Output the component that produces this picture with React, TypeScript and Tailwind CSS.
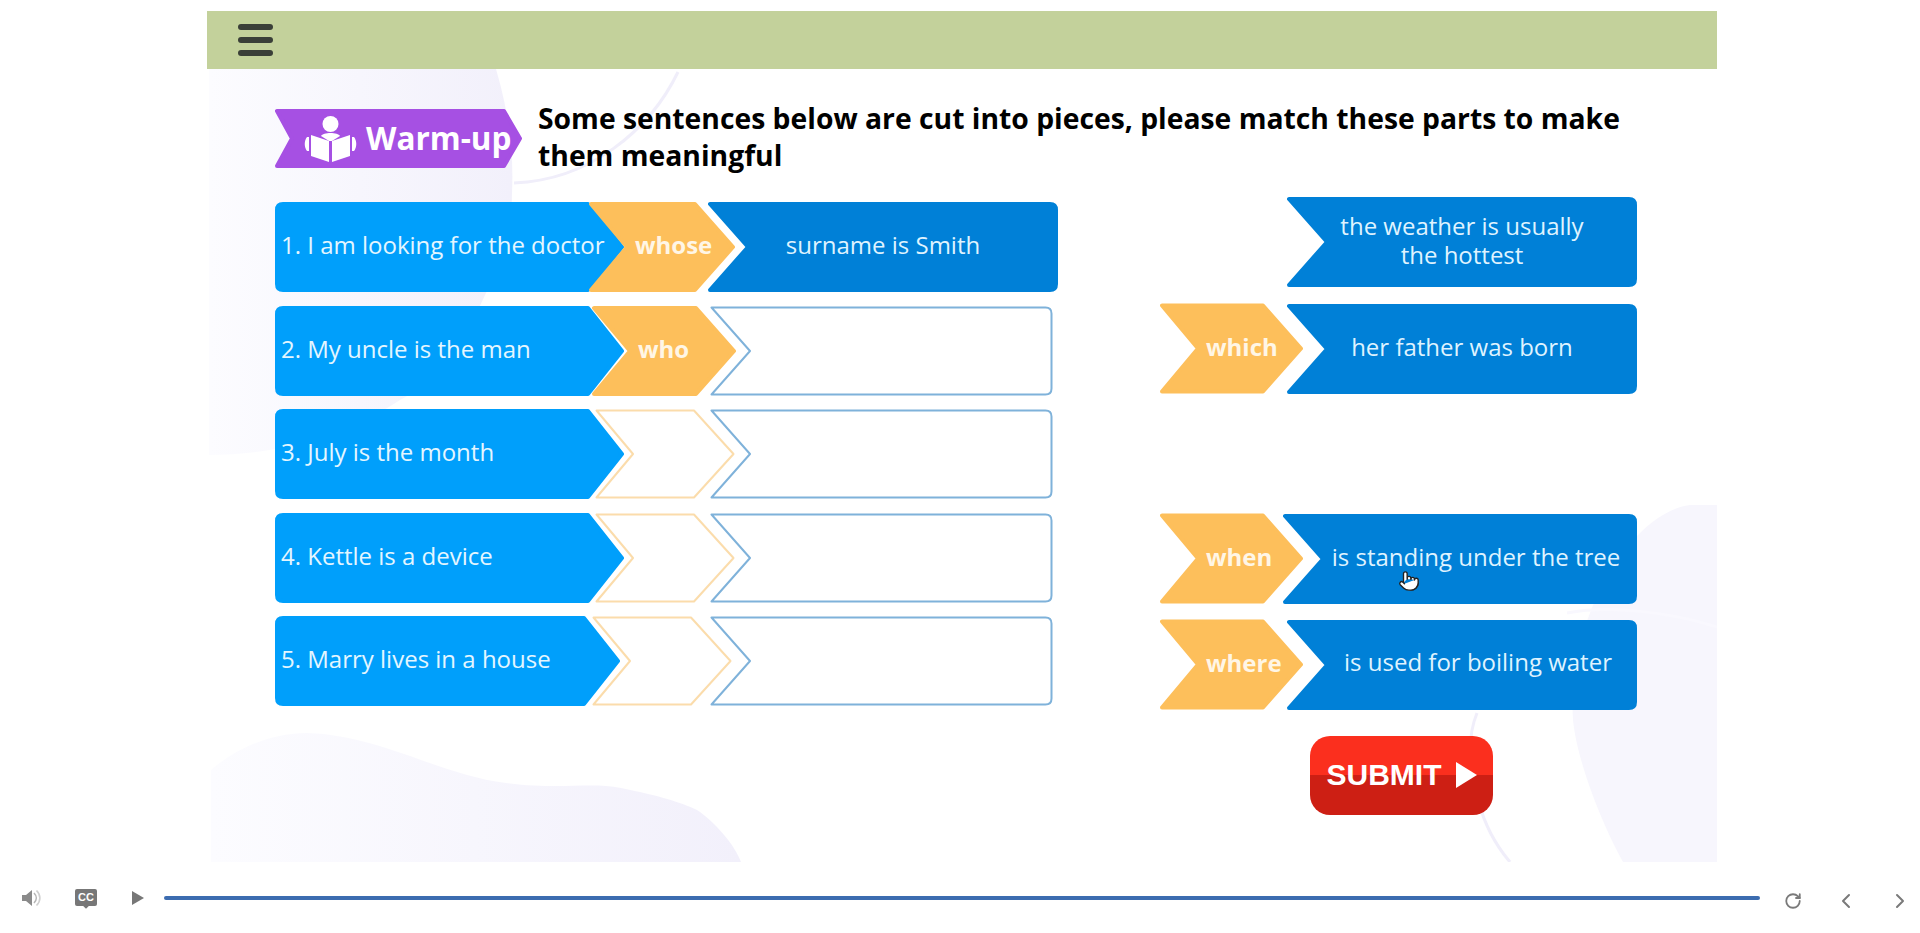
import type { ReactNode } from 'react';
import { ChevronLeft, ChevronRight, Pointer, RotateCw } from 'lucide-react';

const BLUE = '#009ffb';
const DARK = '#0080d7';
const ORANGE = '#fdbf5b';

// builds the outline for a ribbon: optional notch on the left, optional point on the right
function ribbon(w: number, h: number, notch: number, point: number, i: number) {
  const r = 6;
  const left = notch > 0
    ? `M${i} ${i}`
    : `M${i + r} ${i}`;
  const right = point > 0
    ? `H${w - point} L${w - i} ${h / 2} L${w - point} ${h - i}`
    : `H${w - i - r} Q${w - i} ${i} ${w - i} ${i + r} V${h - i - r} Q${w - i} ${h - i} ${w - i - r} ${h - i}`;
  const back = notch > 0
    ? `H${i} L${notch} ${h / 2} Z`
    : `H${i + r} Q${i} ${h - i} ${i} ${h - i - r} V${i + r} Q${i} ${i} ${i + r} ${i} Z`;
  return `${left} ${right} ${back}`;
}

type TagProps = {
  w: number;
  h: number;
  notch?: number;
  point?: number;
  fill?: string;
  stroke?: string;
  className: string;
  children?: ReactNode;
};

function Tag({ w, h, notch = 0, point = 0, fill, stroke, className, children }: TagProps) {
  return (
    <div className={`relative flex shrink-0 items-center ${className}`}>
      <svg className="absolute inset-0 h-full w-full" viewBox={`0 0 ${w} ${h}`} fill="none">
        <path
          d={ribbon(w, h, notch, point, fill ? 2 : 1.5)}
          fill={fill ?? '#ffffff'}
          stroke={fill ?? stroke}
          strokeWidth={fill ? 4 : 2}
          strokeLinejoin="round"
        />
      </svg>
      {children}
    </div>
  );
}

function Sentence({ text, w = 349, shoulder = 36 }: { text: string; w?: number; shoulder?: number }) {
  return (
    <Tag
      w={w}
      h={90}
      point={shoulder}
      fill={BLUE}
      className={w === 345 ? 'h-[90px] w-[345px]' : 'h-[90px] w-[349px]'}
    >
      <span className="relative whitespace-nowrap pb-[4px] pl-[6px] text-[24px] text-[#e4f6ff]">{text}</span>
    </Tag>
  );
}

function Word({ text, w = 143, className }: { text: string; w?: number; className: string }) {
  return (
    <Tag w={w} h={90} notch={38} point={40} fill={ORANGE} className={className}>
      <span className="relative pb-[4px] pl-[46px] text-[24px] font-bold text-[#fff6e6]">{text}</span>
    </Tag>
  );
}

function Answer({ children, className }: { children: ReactNode; className: string }) {
  return (
    <Tag w={350} h={90} notch={40} fill={DARK} className={`h-[90px] w-[350px] justify-center ${className}`}>
      <span className="relative pb-[5px] text-center text-[24px] leading-[29px] text-[#dff3ff]">{children}</span>
    </Tag>
  );
}

function EmptyWord({ className }: { className: string }) {
  return <Tag w={140} h={90} notch={38} point={41} stroke="#fbdcab" className={`h-[90px] w-[140px] ${className}`} />;
}

function EmptyAnswer({ className }: { className: string }) {
  return <Tag w={343} h={90} notch={40} stroke="#7fb2da" className={`h-[90px] w-[343px] ${className}`} />;
}

function Decor() {
  return (
    <svg className="absolute inset-0 h-full w-full" viewBox="207 69 1510 793" fill="none">
      <defs>
        <linearGradient id="lav" x1="0" x2="1" y1="0" y2="0">
          <stop offset="0" stopColor="#fcfcff" />
          <stop offset="1" stopColor="#f2f0fb" />
        </linearGradient>
      </defs>
      <path
        d="M209 69 H496 C508 110 514 150 512 193 C512 240 500 270 486 293 C460 350 430 385 400 400 C340 440 270 455 209 455 Z"
        fill="url(#lav)"
      />
      <path d="M678 72 C650 130 590 180 514 183" stroke="#f0eefa" strokeWidth="3" />
      <path
        d="M211 770 C240 745 275 733 307 733 C380 735 440 775 506 783 C560 790 590 782 621 788 C660 796 680 802 697 810 C715 822 735 845 741 862 H211 Z"
        fill="url(#lav)"
      />
      <path
        d="M1717 505 H1690 C1650 510 1610 560 1590 613 C1575 650 1571 690 1573 720 C1577 760 1600 820 1623 862 H1717 Z"
        fill="#f7f6fd"
      />
      <path d="M1477 713 C1468 735 1468 765 1478 800 C1486 830 1498 848 1510 862" stroke="#f0eefa" strokeWidth="3" />
      <path d="M1567 613 C1610 605 1670 612 1717 627" stroke="#f9f8fe" strokeWidth="3" />
    </svg>
  );
}

function ReaderIcon() {
  return (
    <svg width="53" height="48" viewBox="0 0 53 48" fill="#ffffff" className="shrink-0">
      <circle cx="26.5" cy="9" r="8" />
      <path d="M17 21 C19 17 34 17 36 21 L28 26 L25 26 Z" />
      <path d="M7 20 L25 26 V47 L7 41 Z" />
      <path d="M46 20 L28 26 V47 L46 41 Z" />
      <path d="M3 22 C0 26 0 32 3 36 H5 V22 Z" />
      <path d="M50 22 C53 26 53 32 50 36 H48 V22 Z" />
    </svg>
  );
}

export default function App() {
  return (
    <div className="relative flex h-[933px] flex-col overflow-hidden bg-white font-['Open_Sans',sans-serif]">
      <div className="ml-[207px] mt-[11px] w-[1510px]">
        <div className="flex h-[58px] items-center bg-[#c3d19b] pl-[31px]">
          <div className="flex w-[35px] flex-col gap-[7px]">
            <div className="h-[6px] rounded-full bg-[#3a3f38]" />
            <div className="h-[6px] rounded-full bg-[#3a3f38]" />
            <div className="h-[6px] rounded-full bg-[#3a3f38]" />
          </div>
        </div>

        <div className="relative h-[793px] pl-[68px] pt-[40px]">
          <Decor />

          <div className="relative flex items-start">
            <Tag w={247} h={59} notch={17} point={18} fill="#a650e3" className="h-[59px] w-[247px] pl-[29px]">
              <div className="relative flex items-center gap-[9px]">
                <ReaderIcon />
                <span className="whitespace-nowrap pb-[2px] text-[31.5px] font-bold leading-none text-white">Warm-up</span>
              </div>
            </Tag>
            <h1 className="-mt-[9px] ml-[16px] w-[1110px] text-[28.3px] font-bold leading-[37px] text-black">
              Some sentences below are cut into pieces, please match these parts to make them meaningful
            </h1>
          </div>

          <div className="relative mt-[23px] flex items-start">
            <div className="flex w-[786px] flex-col gap-[13.5px] pt-[5px]">
              <div className="flex">
                <Sentence text="1. I am looking for the doctor" />
                <Word text="whose" w={146} className="-ml-[35px] h-[90px] w-[146px]" />
                <Answer className="-ml-[27px]">surname is Smith</Answer>
              </div>
              <div className="flex">
                <Sentence text="2. My uncle is the man" />
                <Word text="who" w={144} className="-ml-[32px] h-[90px] w-[144px]" />
                <EmptyAnswer className="-ml-[26px]" />
              </div>
              <div className="flex">
                <Sentence text="3. July is the month" />
                <EmptyWord className="-ml-[29px]" />
                <EmptyAnswer className="-ml-[25px]" />
              </div>
              <div className="flex">
                <Sentence text="4. Kettle is a device" />
                <EmptyWord className="-ml-[29px]" />
                <EmptyAnswer className="-ml-[25px]" />
              </div>
              <div className="flex">
                <Sentence text="5. Marry lives in a house" w={345} />
                <EmptyWord className="-ml-[28px]" />
                <EmptyAnswer className="-ml-[22px]" />
              </div>
            </div>

            <div className="ml-[99px] flex flex-col">
              <Answer className="ml-[127px]">
                the weather is usually
                <br />
                the hottest
              </Answer>

              <div className="mt-[15px] flex items-center">
                <Word text="which" className="h-[93px] w-[143px]" />
                <Answer className="-ml-[16px]">her father was born</Answer>
              </div>

              <div className="relative mt-[117px] flex items-center">
                <Word text="when" className="h-[93px] w-[143px]" />
                <Tag w={354} h={90} notch={40} fill={DARK} className="-ml-[20px] h-[90px] w-[354px] justify-center pl-[32px]">
                  <span className="relative whitespace-nowrap pb-[4px] text-[24px] text-[#dff3ff]">is standing under the tree</span>
                </Tag>
                <Pointer size={22} fill="#ffffff" strokeWidth={1.5} className="absolute left-[238px] top-[58px] text-[#222222]" />
              </div>

              <div className="mt-[13px] flex items-center">
                <Word text="where" className="h-[93px] w-[143px]" />
                <Tag w={350} h={90} notch={40} fill={DARK} className="-ml-[16px] h-[90px] w-[350px] justify-center pl-[32px]">
                  <span className="relative whitespace-nowrap pb-[5px] text-[24px] text-[#dff3ff]">is used for boiling water</span>
                </Tag>
              </div>

              <button className="ml-[150px] mt-[25px] flex h-[79px] w-[183px] items-center justify-center gap-[14px] rounded-[20px] bg-[linear-gradient(#fb2f1e_50%,#cd1f14_50%)] pb-[2px] font-['Liberation_Sans',sans-serif] text-[30px] font-bold text-white">
                SUBMIT
                <span className="h-0 w-0 border-y-[13px] border-l-[21px] border-y-transparent border-l-white" />
              </button>
            </div>
          </div>
        </div>
      </div>

      <div className="flex h-[71px] items-center text-[#7a7a7a]">
        <svg width="20" height="20" viewBox="0 0 20 20" className="ml-[22px] shrink-0" fill="none">
          <path d="M0 7 H4 L10 2 V18 L4 13 H0 Z" fill="#8a8a8a" />
          <path d="M12 5 C15 8 15 12 12 15" stroke="#b5b5b5" strokeWidth="1.6" />
          <path d="M14.5 2.5 C19 7 19 13 14.5 17.5" stroke="#cfcfcf" strokeWidth="1.6" />
        </svg>
        <div className="relative ml-[33px] flex h-[17px] w-[22px] shrink-0 items-center justify-center rounded-[2px] bg-[#777777] font-['Liberation_Sans',sans-serif] text-[11px] font-bold leading-none text-white">
          CC
          <span className="absolute -bottom-[2px] left-[9px] h-[4px] w-[4px] rotate-45 bg-[#777777]" />
        </div>
        <svg width="12" height="14" viewBox="0 0 12 14" className="ml-[35px] shrink-0" fill="#777777">
          <path d="M0 0 L12 7 L0 14 Z" />
        </svg>
        <div className="ml-[20px] h-[4px] w-[1596px] shrink-0 rounded-full bg-[#3c6cb0]" />
        <RotateCw size={18} strokeWidth={2.4} className="ml-[24px] mt-[6px] shrink-0" />
        <ChevronLeft size={24} strokeWidth={2} className="ml-[32px] mt-[6px] shrink-0" />
        <ChevronRight size={24} strokeWidth={2} className="ml-[30px] mt-[6px] shrink-0" />
      </div>
    </div>
  );
}
